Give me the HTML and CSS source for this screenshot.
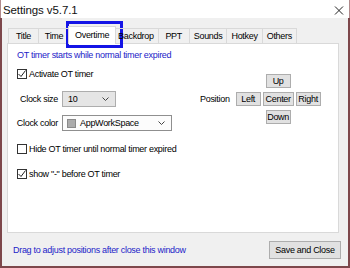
FILE: index.html
```html
<!DOCTYPE html>
<html lang="en">
  <head>
    <meta charset="UTF-8" />
    <meta name="viewport" content="width=device-width, initial-scale=1.0" />
    <title>Settings</title>
    <link rel="stylesheet" href="styles.css">
  </head>
  <body>
    <div class="window">
      <div class="titlebar">
        <span class="title">Settings v5.7.1</span>
        <svg class="close" width="10" height="9" viewBox="0 0 10 9">
          <path d="M1 0.5 L9 8.5 M9 0.5 L1 8.5" stroke="#222" stroke-width="1" fill="none" />
        </svg>
      </div>
      <div class="content">
        <div class="tabs">
          <div class="tab">Title</div>
          <div class="tab">Time</div>
          <div class="tab active">Overtime</div>
          <div class="tab">Backdrop</div>
          <div class="tab">PPT</div>
          <div class="tab">Sounds</div>
          <div class="tab">Hotkey</div>
          <div class="tab">Others</div>
        </div>
        <div class="panel">
          <div class="options">
            <p class="note">OT timer starts while normal timer expired</p>
            <label class="check first">
              <span class="box">
                <svg width="10" height="10" viewBox="0 0 10 10">
                  <path d="M1.5 5 L4 7.5 L8.5 1.5" stroke="#222" stroke-width="1" fill="none" />
                </svg>
              </span>
              Activate OT timer
            </label>
            <div class="field size-field">
              <span class="field-label">Clock size</span>
              <div class="select small">
                <span>10</span>
                <svg class="chevron" width="7" height="4" viewBox="0 0 7 4">
                  <path d="M0.5 0.5 L3.5 3.5 L6.5 0.5" stroke="#444" stroke-width="1" fill="none" />
                </svg>
              </div>
            </div>
            <div class="field color-field">
              <span class="field-label">Clock color</span>
              <div class="select wide">
                <span class="swatch"></span>
                <span>AppWorkSpace</span>
                <svg class="chevron" width="7" height="4" viewBox="0 0 7 4">
                  <path d="M0.5 0.5 L3.5 3.5 L6.5 0.5" stroke="#444" stroke-width="1" fill="none" />
                </svg>
              </div>
            </div>
            <label class="check hide-row">
              <span class="box"></span>
              Hide OT timer until normal timer expired
            </label>
            <label class="check dash-row">
              <span class="box">
                <svg width="10" height="10" viewBox="0 0 10 10">
                  <path d="M1.5 5 L4 7.5 L8.5 1.5" stroke="#222" stroke-width="1" fill="none" />
                </svg>
              </span>
              show "-" before OT timer
            </label>
          </div>
          <div class="position">
            <span class="position-label">Position</span>
            <div class="pad">
              <button class="pad-btn up">Up</button>
              <button class="pad-btn left">Left</button>
              <button class="pad-btn center">Center</button>
              <button class="pad-btn right">Right</button>
              <button class="pad-btn down">Down</button>
            </div>
          </div>
        </div>
        <div class="footer">
          <span class="hint">Drag to adjust positions after close this window</span>
          <button class="save">Save and Close</button>
        </div>
      </div>
      <div class="highlight"></div>
    </div>
  </body>
</html>
```

FILE: styles.css
```css
body {
  margin: 0;
  font-family: "Liberation Sans", Arial, sans-serif;
  font-size: 9px;
  letter-spacing: -0.3px;
  color: #000;
}

.window {
  position: relative;
  width: 350px;
  height: 268px;
  box-sizing: border-box;
  border: 2px solid #7d474b;
  border-top: none;
  background-color: #f0f0f0;
  display: flex;
  flex-direction: column;
}

.titlebar {
  height: 18px;
  background-color: #fff;
  display: flex;
  align-items: center;
  justify-content: space-between;
  padding: 0 5px 0 2px;
  margin: 0 -2px;
  border-left: 1px solid #b08a8c;
  border-right: 1px solid #b08a8c;
  box-sizing: border-box;
}

.title {
  font-size: 11.5px;
  letter-spacing: -0.1px;
  color: #111;
  padding-top: 2px;
}

.close {
  margin-top: 2px;
}

.content {
  flex: 1;
  display: flex;
  flex-direction: column;
  padding-top: 10px;
}

.tabs {
  display: flex;
  margin-left: 6px;
  height: 15px;
  position: relative;
  z-index: 1;
}

.tab {
  min-width: 31px;
  padding: 0 4px;
  height: 15px;
  line-height: 15px;
  text-align: center;
  border: 1px solid #d9d9d9;
  border-bottom: none;
  border-left: none;
  box-sizing: border-box;
}

.tab:first-child {
  border-left: 1px solid #d9d9d9;
}

.tab.active {
  background-color: #fff;
  margin: -2px -2px 0 -2px;
  height: 18px;
  line-height: 17px;
  padding: 0 6px;
  border-left: 1px solid #d9d9d9;
  position: relative;
}

.panel {
  margin: 0 9px 0 5px;
  height: 190px;
  box-sizing: border-box;
  background-color: #fff;
  border: 1px solid #d9d9d9;
  display: flex;
}

.options {
  flex: 0 0 192px;
  padding: 5px 0 0 9px;
  box-sizing: border-box;
}

.note {
  margin: 0;
  line-height: 12px;
  color: #2323c8;
  white-space: nowrap;
}

.check {
  display: flex;
  align-items: center;
  gap: 2px;
  height: 12px;
  white-space: nowrap;
}

.check.first {
  margin-top: 7px;
}

.check.hide-row {
  margin-top: 12px;
}

.check.dash-row {
  margin-top: 13px;
}

.box {
  width: 10px;
  height: 10px;
  border: 1px solid #333;
  box-sizing: border-box;
  background-color: #fff;
  display: flex;
}

.box svg {
  margin: -1px;
}

.field {
  display: flex;
  align-items: center;
  margin-left: -1px;
}

.size-field {
  margin-top: 11px;
}

.color-field {
  margin-top: 8px;
}

.field-label {
  width: 42px;
  text-align: right;
  margin-right: 4px;
  white-space: nowrap;
}

.select {
  height: 16px;
  box-sizing: border-box;
  border: 1px solid #adadad;
  display: flex;
  align-items: center;
  padding: 0 6px 0 5px;
}

.select.small {
  width: 54px;
  background-color: #e5e5e5;
}

.select.wide {
  width: 110px;
  background-color: #fcfcfc;
  border-color: #8f8f8f;
  padding-left: 4px;
}

.chevron {
  margin-left: auto;
}

.swatch {
  width: 9px;
  height: 9px;
  background-color: #ababab;
  border: 1px solid #8a8a8a;
  box-sizing: border-box;
  margin-right: 4px;
}

.position {
  display: flex;
  align-items: center;
  gap: 6px;
  margin-top: 30px;
  align-self: flex-start;
}

.pad {
  display: grid;
  grid-template-columns: 25px 31px 25px;
  grid-template-rows: 14px 14px 14px;
  column-gap: 2px;
  row-gap: 4px;
}

.pad-btn,
.save {
  font-family: inherit;
  font-size: 9px;
  letter-spacing: -0.3px;
  background-color: #e1e1e1;
  border: 1px solid #adadad;
  padding: 0;
  margin: 0;
  color: #000;
}

.pad-btn.up {
  grid-column: 2;
  grid-row: 1;
  justify-self: center;
  width: 25px;
}

.pad-btn.left {
  grid-column: 1;
  grid-row: 2;
}

.pad-btn.center {
  grid-column: 2;
  grid-row: 2;
}

.pad-btn.right {
  grid-column: 3;
  grid-row: 2;
}

.pad-btn.down {
  grid-column: 2;
  grid-row: 3;
  justify-self: center;
  width: 25px;
}

.footer {
  display: flex;
  align-items: center;
  justify-content: space-between;
  margin: 8px 7px 0 11px;
  height: 18px;
}

.hint {
  color: #2323c8;
}

.save {
  width: 72px;
  height: 18px;
}

.highlight {
  position: absolute;
  left: 64px;
  top: 21px;
  width: 57px;
  height: 27px;
  box-sizing: border-box;
  border: 3px solid #1414e6;
}
```
